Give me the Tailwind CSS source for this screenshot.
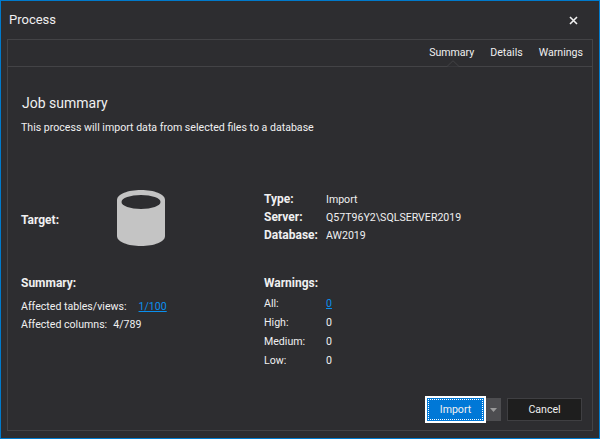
<!DOCTYPE html>
<html lang="en">

<head>
  <meta charset="UTF-8" />
  <title>Process</title>
  <script src="https://cdn.jsdelivr.net/npm/@tailwindcss/browser@4"></script>
</head>

<body class="w-[600px] h-[439px] overflow-hidden bg-[#2d2d30] font-['Roboto',sans-serif] text-[10.600px] leading-[15px] text-[#f0f0f0]">
  <div class="w-[600px] h-[439px] border border-[#007acc] flex flex-col">

    <!-- Title bar -->
    <div class="h-[38px] shrink-0 pl-[8px] pr-[21px] flex items-center justify-between">
      <span class="text-[13px] leading-[20px]">Process</span>
      <svg width="9" height="9" viewBox="0 0 9 9"><path d="M1 1l7 7M8 1l-7 7" stroke="#f0f0f0" stroke-width="1.6" /></svg>
    </div>

    <!-- Panel -->
    <div class="mx-[6px] mb-[7px] flex-1 border border-[#434346] flex flex-col">

      <!-- Tabs -->
      <div class="relative h-[27px] shrink-0 border-b border-[#434346] flex justify-end items-center gap-[16px] pr-[9px] pb-[2px]">
        <span>Summary</span>
        <span>Details</span>
        <span>Warnings</span>
        <svg width="14" height="7" viewBox="0 0 14 7" class="absolute right-[132px] -bottom-px"><path d="M0 6.500h1L7 .7l6 5.800h1" fill="#2d2d30" stroke="#434346" /></svg>
      </div>

      <div class="flex-1 pl-[13px] pr-[10px] flex flex-col">
        <h1 class="mt-[26px] ml-px text-[14px] leading-[20px] font-normal">Job summary</h1>
        <p class="mt-[7px]">This process will import data from selected files to a database</p>

        <div class="mt-[55px] grid grid-cols-[243px_1fr]">
          <!-- Target -->
          <div class="flex items-center h-[58px] pb-[2px]">
            <span class="w-[96px] pt-[4px] font-bold text-[12px]">Target:</span>
            <svg width="48" height="56" viewBox="0 0 48 56">
              <path d="M0 10C0 4 11 0 24 0s24 4 24 10v36c0 6-11 10-24 10S0 52 0 46z" fill="#c4c4c4" />
              <ellipse cx="24" cy="12" rx="19.500" ry="7" fill="#2d2d30" />
            </svg>
          </div>

          <div class="grid grid-cols-[62px_1fr] content-start auto-rows-[18px] items-center">
            <span class="font-bold text-[12px]">Type:</span><span>Import</span>
            <span class="font-bold text-[12px]">Server:</span><span>Q57T96Y2\SQLSERVER2019</span>
            <span class="font-bold text-[12px]">Database:</span><span>AW2019</span>
          </div>

          <!-- Summary -->
          <div class="mt-[28px]">
            <div class="font-bold text-[12px]">Summary:</div>
            <div class="mt-[6px] h-[18px] flex items-center gap-[12px]">
              <span>Affected tables/views:</span>
              <a href="#" class="text-[#0a8fee] underline">1/100</a>
            </div>
            <div class="h-[18px] flex items-center gap-[6px]">
              <span>Affected columns:</span>
              <span>4/789</span>
            </div>
          </div>

          <!-- Warnings -->
          <div class="mt-[28px]">
            <div class="font-bold text-[12px]">Warnings:</div>
            <div class="mt-[3px] grid grid-cols-[62px_1fr] auto-rows-[19px] items-center">
              <span>All:</span><a href="#" class="text-[#0a8fee] underline">0</a>
              <span>High:</span><span>0</span>
              <span>Medium:</span><span>0</span>
              <span>Low:</span><span>0</span>
            </div>
          </div>
        </div>

        <!-- Buttons -->
        <div class="mt-auto mb-[7px] flex justify-end items-center">
          <button class="w-[61px] h-[27px] border-2 border-white bg-[#0078d7] p-px">
            <span class="block h-full border border-dotted border-white leading-[19px]">Import</span>
          </button>
          <div class="w-[15px] h-[23px] bg-[#4d4d50] flex items-center justify-center">
            <svg width="7" height="4" viewBox="0 0 7 4"><path d="M0 0h7L3.500 4z" fill="#9a9a9a" /></svg>
          </div>
          <button class="ml-[6px] w-[75px] h-[23px] border border-[#3f3f42] bg-[#1e1e1e]">Cancel</button>
        </div>
      </div>
    </div>
  </div>
</body>

</html>
